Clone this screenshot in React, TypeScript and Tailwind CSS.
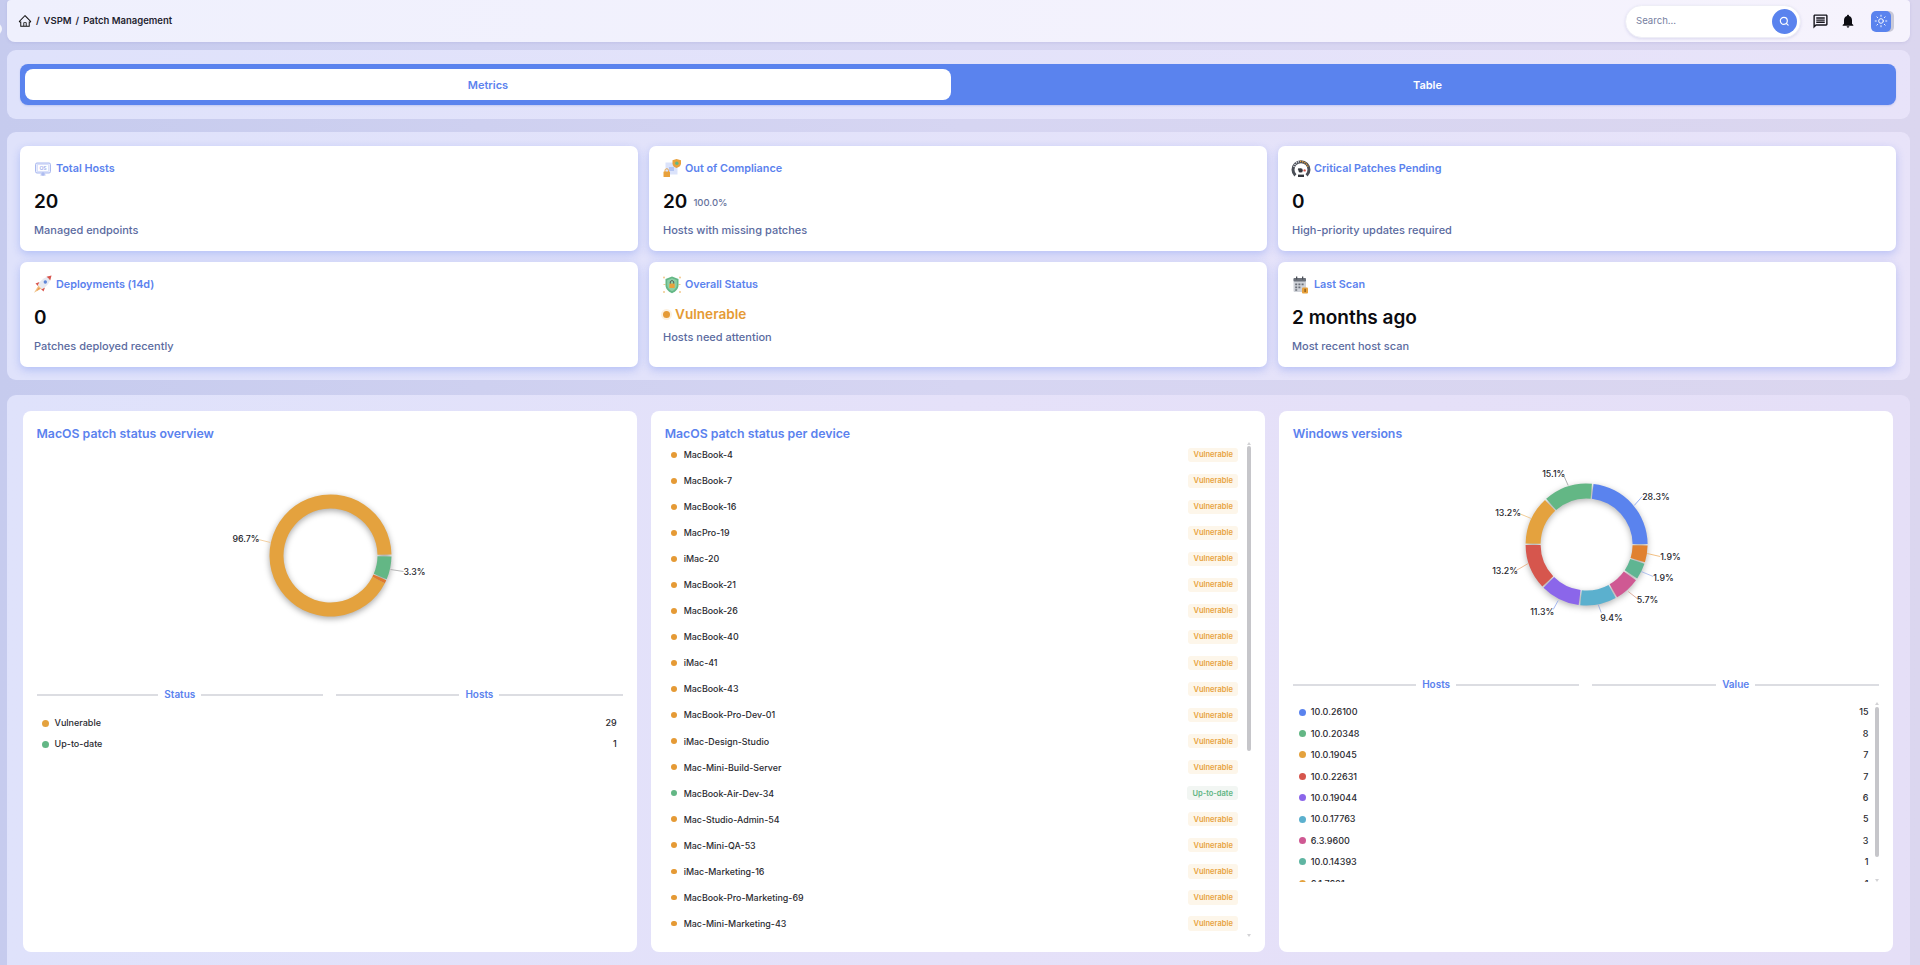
import { Search, Sun } from "lucide-react"
import { AiOutlineHome } from "react-icons/ai"
import { MdNotifications, MdOutlineMessage } from "react-icons/md"

const macDevices = [
  "MacBook-4",
  "MacBook-7",
  "MacBook-16",
  "MacPro-19",
  "iMac-20",
  "MacBook-21",
  "MacBook-26",
  "MacBook-40",
  "iMac-41",
  "MacBook-43",
  "MacBook-Pro-Dev-01",
  "iMac-Design-Studio",
  "Mac-Mini-Build-Server",
  "MacBook-Air-Dev-34",
  "Mac-Studio-Admin-54",
  "Mac-Mini-QA-53",
  "iMac-Marketing-16",
  "MacBook-Pro-Marketing-69",
  "Mac-Mini-Marketing-43",
]

const windowsRows = [
  { name: "10.0.26100", value: 15, dot: "bg-[#5a83ee]" },
  { name: "10.0.20348", value: 8, dot: "bg-[#63b785]" },
  { name: "10.0.19045", value: 7, dot: "bg-[#e4a23e]" },
  { name: "10.0.22631", value: 7, dot: "bg-[#d6564d]" },
  { name: "10.0.19044", value: 6, dot: "bg-[#8b66ea]" },
  { name: "10.0.17763", value: 5, dot: "bg-[#5bb0ce]" },
  { name: "6.3.9600", value: 3, dot: "bg-[#cf5993]" },
  { name: "10.0.14393", value: 1, dot: "bg-[#5fb5a2]" },
  { name: "6.1.7601", value: 1, dot: "bg-[#e4a23e]" },
]

// angles are degrees clockwise from 3 o'clock
function ringPath(cx: number, cy: number, r0: number, r1: number, a0: number, a1: number) {
  const pt = (r: number, a: number) => {
    const t = (a * Math.PI) / 180
    return `${(cx + r * Math.cos(t)).toFixed(2)} ${(cy + r * Math.sin(t)).toFixed(2)}`
  }
  const large = a1 - a0 > 180 ? 1 : 0
  return `M${pt(r1, a0)} A${r1} ${r1} 0 ${large} 1 ${pt(r1, a1)} L${pt(r0, a1)} A${r0} ${r0} 0 ${large} 0 ${pt(r0, a0)} Z`
}

const windowsSlices = [
  { a0: -83.5, a1: -0.5, fill: "#5a83ee" },
  { a0: 1, a1: 17, fill: "#e0812f" },
  { a0: 18.5, a1: 34, fill: "#5fb592" },
  { a0: 36, a1: 60, fill: "#cf5993" },
  { a0: 61.5, a1: 96, fill: "#5bb0ce" },
  { a0: 97.5, a1: 135, fill: "#8b66ea" },
  { a0: 136.5, a1: 179.5, fill: "#d6564d" },
  { a0: 181, a1: 227, fill: "#e4a23e" },
  { a0: 228.5, a1: 275, fill: "#63b785" },
]

const windowsLabels = [
  { t: "28.3%", x: 1642, y: 499, line: "M1634 505 L1642 496", c: "#7f9df0" },
  { t: "1.9%", x: 1660, y: 559, line: "M1647 553 L1660 556", c: "#efb065" },
  { t: "1.9%", x: 1653, y: 580, line: "M1641 571 L1653 576", c: "#9db3ea" },
  { t: "5.7%", x: 1636.5, y: 602, line: "M1628 591 L1637 598", c: "#d39a86" },
  { t: "9.4%", x: 1600, y: 620, line: "M1598 604 L1601 612", c: "#8ea6dc" },
  { t: "11.3%", x: 1530, y: 614, line: "M1558 600 L1553 609", c: "#8ea6ef" },
  { t: "13.2%", x: 1492, y: 573, line: "M1528 563 L1516 570", c: "#e6a877" },
  { t: "13.2%", x: 1495, y: 515, line: "M1531 518 L1519 513", c: "#efc07c" },
  { t: "15.1%", x: 1542, y: 476, line: "M1568 485 L1564 476", c: "#9a9a9a" },
]

function OsMonitorIcon() {
  return (
    <svg viewBox="0 0 18 18" className="h-[18px] w-[18px]">
      <rect x="1.5" y="3" width="15" height="10" rx="1.5" fill="#e6ebfd" stroke="#a9b8ef" strokeWidth="1" />
      <rect x="3.5" y="4.8" width="11" height="6.4" fill="#fff" stroke="#c3cef5" strokeWidth="0.5" />
      <text x="9" y="9.8" textAnchor="middle" className="fill-[#98a9ea] text-[5px] font-semibold">
        OS
      </text>
      <path d="M6.5 15h5M8 13h2v2H8z" stroke="#a9b8ef" strokeWidth="1" fill="#c3cef5" />
    </svg>
  )
}

function RocketIcon() {
  return (
    <svg viewBox="0 0 18 18" className="-mt-[3px] h-[18px] w-[18px] overflow-visible">
      <path d="M4.5 10.5 L0 17.8 L7.5 13.5 Z" fill="#f0c48a" />
      <path d="M4.5 12.5 L2.5 16 L6.2 13.8 Z" fill="#ee9a4e" />
      <path d="M5.5 7 L1.5 8.5 L4 11 Z" fill="#d9534a" />
      <path d="M11 12.5 L9.5 16.5 L7 14 Z" fill="#d9534a" />
      <path d="M4 9.5 C7 4.5 11.5 1.5 17.5 0.5 C16.5 6.5 13.5 11 8.5 14 Z" fill="#e6e9f1" />
      <path d="M12.5 1.8 L17.5 0.5 L16.2 5.5 C15 3.8 14 2.8 12.5 1.8 Z" fill="#d9534a" />
      <circle cx="11.3" cy="7" r="1.7" fill="#5f86d8" />
    </svg>
  )
}

function ComplianceIcon() {
  return (
    <svg viewBox="0 0 18 18" className="-mt-[2px] h-[18px] w-[18px] overflow-visible">
      <rect x="2.5" y="3.5" width="12" height="12" fill="#dbe3fb" />
      <rect x="6" y="8" width="5" height="4" fill="#b4c5f3" />
      <path d="M13.5 0 L18 1.3 V4.5 C18 6.8 15.8 8.4 13.5 9 C11.3 8.4 9.5 6.8 9.5 4.5 V1.3 Z" fill="#e8a13c" />
      <circle cx="13.8" cy="4.2" r="1.7" fill="#63b785" />
      <path d="M2 13 V11.5 C2 9.2 5.5 9.2 5.5 11.5 V13" fill="none" stroke="#e8a13c" strokeWidth="1" />
      <rect x="0.5" y="12.5" width="6.5" height="5.5" rx="0.5" fill="#e8a13c" />
    </svg>
  )
}

function ShieldIcon() {
  return (
    <svg viewBox="0 0 18 18" className="-mt-[1px] h-[18px] w-[18px] overflow-visible">
      <g fill="#f2c98e">
        <circle cx="1" cy="1.5" r="1" />
        <circle cx="17" cy="1.5" r="1" />
        <circle cx="1" cy="16" r="1" />
        <circle cx="17" cy="16" r="1" />
        <rect x="0.5" y="8" width="2" height="1" />
        <rect x="15.5" y="8" width="2" height="1" />
      </g>
      <path d="M9 0.5 L15.5 3 V9 C15.5 13 12.5 15.8 9 17.2 C5.5 15.8 2.5 13 2.5 9 V3 Z" fill="#63b785" />
      <path d="M9 2.3 L13.8 4.2 V9 C13.8 12 11.5 14.2 9 15.3 C6.5 14.2 4.2 12 4.2 9 V4.2 Z" fill="#8ccfa6" />
      <rect x="6.3" y="7.5" width="5.4" height="4.5" rx="0.5" fill="#e8a13c" />
      <path d="M7.3 7.5 V6.2 C7.3 4.2 10.7 4.2 10.7 6.2 V7.5" fill="none" stroke="#4a4a4a" strokeWidth="1" />
    </svg>
  )
}

function GaugeIcon() {
  return (
    <svg viewBox="0 0 18 18" className="-mt-[1px] h-[18px] w-[18px] overflow-visible">
      <path d="M3.4 15.4 A8 8 0 1 1 14.6 15.4" fill="none" stroke="#4b4f57" strokeWidth="3" />
      <path d="M1.8 7 A7.6 7.6 0 0 1 7 1.6" fill="none" stroke="#d8dbe2" strokeWidth="1.5" strokeDasharray="1.2 1" />
      <path d="M8 1.4 A7.6 7.6 0 0 1 16 7" fill="none" stroke="#e8a13c" strokeWidth="1.5" strokeDasharray="1.2 1" />
      <path d="M6 9 L10 10" stroke="#33363c" strokeWidth="1.6" />
      <circle cx="8.6" cy="10.4" r="2.2" fill="#33363c" />
      <circle cx="12.6" cy="10.4" r="1.2" fill="#d6564d" />
      <path d="M6 15.8h6" stroke="#33363c" strokeWidth="2.4" />
    </svg>
  )
}

function CalendarIcon() {
  return (
    <svg viewBox="0 0 18 18" className="-mt-[1px] h-[18px] w-[18px] overflow-visible">
      <rect x="1.5" y="2" width="12.5" height="14" rx="1.2" fill="#cfd2d8" />
      <rect x="1.5" y="2" width="12.5" height="3.6" rx="1" fill="#6b7079" />
      <rect x="4" y="0.5" width="1.3" height="3" fill="#4b4f57" />
      <rect x="10" y="0.5" width="1.3" height="3" fill="#4b4f57" />
      <path d="M3.2 7.5h2v1.8h-2zM6.4 7.5h2v1.8h-2zM9.6 7.5h2v1.8h-2zM3.2 10.5h2v1.8h-2zM6.4 10.5h2v1.8h-2zM3.2 13.3h2v1.5h-2z" fill="#6b7079" />
      <rect x="10" y="11.5" width="6" height="6" rx="1" fill="#e8a13c" />
      <rect x="12.5" y="12.8" width="1.2" height="3.2" fill="#7a5317" />
    </svg>
  )
}

function MetricCard({
  icon,
  title,
  children,
}: {
  icon: React.ReactNode
  title: string
  children: React.ReactNode
}) {
  return (
    <div className="h-[105px] rounded-[7px] bg-white px-[14px] pt-[15px] shadow-[0_3px_9px_rgba(88,120,235,0.32)]">
      <div className="flex h-4 items-center gap-1">
        <div className="flex h-[18px] w-[18px] shrink-0 items-center">{icon}</div>
        <span className="text-[10.8px] font-semibold text-[#5b82ee]">{title}</span>
      </div>
      {children}
    </div>
  )
}

function Value({ children, note }: { children: React.ReactNode; note?: string }) {
  return (
    <div className="mt-[11px] flex h-7 items-center gap-[6px]">
      <span className="text-[19px] font-semibold text-[#0b0b0f]">{children}</span>
      {note && <span className="mt-[3px] text-[9.5px] font-medium text-[#66729c]">{note}</span>}
    </div>
  )
}

function Sub({ children }: { children: React.ReactNode }) {
  return <p className="mt-[6px] text-[11px] leading-4 font-medium text-[#5b6b9f]">{children}</p>
}

function DividerHead({ label }: { label: string }) {
  return (
    <div className="flex h-5 items-center gap-[6px]">
      <div className="h-[2px] flex-1 bg-[#dcdde2]" />
      <span className="text-[10px] font-semibold text-[#5b82ee]">{label}</span>
      <div className="h-[2px] flex-1 bg-[#dcdde2]" />
    </div>
  )
}

function ScrollTrack({ thumb }: { thumb: string }) {
  return (
    <div className="flex w-[4px] shrink-0 flex-col items-center justify-between">
      <div className="h-0 w-0 border-x-[2.5px] border-b-[3px] border-x-transparent border-b-[#d3d3d6]" />
      <div className={`w-[4px] rounded-full bg-[#c6c6ca] ${thumb}`} />
      <div className="flex-1" />
      <div className="h-0 w-0 border-x-[2.5px] border-t-[3px] border-x-transparent border-t-[#d3d3d6]" />
    </div>
  )
}

export default function App() {
  return (
    <div className="relative h-[965px] overflow-hidden bg-gradient-to-r from-[#c6cbee] via-[#d6d5f2] to-[#dbd6ef] pr-[10px] pl-[7px] font-['Inter',sans-serif]">
      {/* sidebar handle */}
      <div className="absolute top-[23px] -left-[10px] h-3 w-3 rounded-full bg-white/80" />

      {/* Top bar */}
      <header className="flex h-[42px] items-center justify-between rounded-b-[8px] rounded-t-[4px] bg-gradient-to-r from-[#eff0fd] to-[#f6f3fd] pr-[19px] pl-[11px] shadow-[0_1px_3px_rgba(120,120,190,0.18)]">
        <nav className="flex items-center pt-px text-[9.5px] font-semibold text-[#1f2430]">
          <AiOutlineHome className="-mt-px h-[14px] w-[14px] text-[#111]" />
          <span className="mr-[4px] ml-[4px]">/</span>
          <span>VSPM</span>
          <span className="mx-[4px]">/</span>
          <span>Patch Management</span>
        </nav>
        <div className="flex items-center">
          <div className="flex h-[33px] w-[176px] items-center justify-between rounded-full border border-[#eeeef6] bg-white pr-[3px] pl-[10px] shadow-[0_1px_3px_rgba(120,120,190,0.2)]">
            <span className="text-[9.6px] text-[#76809f]">Search...</span>
            <div className="flex h-[25px] w-[25px] items-center justify-center rounded-full bg-[#5a83ee]">
              <Search className="h-[10.5px] w-[10.5px] text-white" strokeWidth={2.6} />
            </div>
          </div>
          <MdOutlineMessage className="ml-[11px] h-[17px] w-[17px] text-[#15151c]" />
          <MdNotifications className="ml-[11px] h-[16px] w-[16px] text-[#0c0c12]" />
          <div className="ml-[15px] flex h-[21px] w-[20px] items-center justify-center rounded-[5px] bg-[#5a83ee] shadow-[3px_0_0_#c9c9d8]">
            <Sun className="h-[14px] w-[14px] text-white" strokeWidth={1.6} />
          </div>
        </div>
      </header>

      {/* Tabs */}
      <section className="mt-2 h-[69px] rounded-[9px] bg-gradient-to-r from-[#dfe2fb] to-[#e8e3f9] pt-[14px] pr-[14px] pl-[13px]">
        <div className="flex h-[41px] items-center rounded-[8px] bg-[#5a83ee] pl-[5px] shadow-[0_1px_2px_rgba(70,100,200,0.2)]">
          <div className="flex h-[31px] w-[926px] items-center justify-center rounded-[8px] bg-white pt-px text-[11px] font-semibold text-[#5b82ee]">
            Metrics
          </div>
          <div className="flex h-[31px] flex-1 items-center justify-center pt-px pl-[8px] text-[11px] font-semibold text-white">
            Table
          </div>
        </div>
      </section>

      {/* Metrics */}
      <section className="mt-[13px] grid h-[248px] grid-cols-3 content-start gap-[11px] rounded-[9px] bg-gradient-to-r from-[#dfe2fb] to-[#e8e3f9] pt-[14px] pr-[14px] pl-[13px]">
        <MetricCard icon={<OsMonitorIcon />} title="Total Hosts">
          <Value>20</Value>
          <Sub>Managed endpoints</Sub>
        </MetricCard>
        <MetricCard icon={<ComplianceIcon />} title="Out of Compliance">
          <Value note="100.0%">20</Value>
          <Sub>Hosts with missing patches</Sub>
        </MetricCard>
        <MetricCard icon={<GaugeIcon />} title="Critical Patches Pending">
          <Value>0</Value>
          <Sub>High-priority updates required</Sub>
        </MetricCard>
        <MetricCard icon={<RocketIcon />} title="Deployments (14d)">
          <Value>0</Value>
          <Sub>Patches deployed recently</Sub>
        </MetricCard>
        <MetricCard icon={<ShieldIcon />} title="Overall Status">
          <div className="mt-[10px] flex h-[22px] items-center gap-[5px]">
            <span className="h-[7px] w-[7px] rounded-full bg-[#e59a35] shadow-[0_0_0_2px_#fdf1df]" />
            <span className="text-[13.6px] font-semibold text-[#e59a35]">Vulnerable</span>
          </div>
          <p className="mt-1 text-[11px] leading-4 font-medium text-[#5b6b9f]">Hosts need attention</p>
        </MetricCard>
        <MetricCard icon={<CalendarIcon />} title="Last Scan">
          <Value>2 months ago</Value>
          <Sub>Most recent host scan</Sub>
        </MetricCard>
      </section>

      {/* Charts */}
      <section className="mt-[15px] grid h-[600px] grid-cols-3 content-start gap-[14px] rounded-[9px] bg-gradient-to-r from-[#dfe2fb] via-[#e5e1f9] to-[#e5dff7] pt-4 pr-[17px] pl-[15.5px]">
        {/* MacOS overview */}
        <div className="h-[541px] rounded-[8px] bg-white px-[14px] pt-[14.5px]">
          <h3 className="h-4 text-[12.3px] leading-4 font-semibold text-[#5b82ee]">MacOS patch status overview</h3>
          <svg viewBox="36.5 441.5 586 243" className="h-[243px] w-[586px] overflow-visible">
            <g className="drop-shadow-[0_2px_3px_rgba(0,0,0,0.35)]">
              <path d={ringPath(330, 555, 47, 61, 27, 359)} fill="#e4a23e" />
              <path d={ringPath(330, 555, 47, 61, 24, 27)} fill="#e0792f" />
              <path d={ringPath(330, 555, 47, 61, 1, 23)} fill="#63b785" />
            </g>
            <path d="M258 539 L270 542" stroke="#f0c48a" strokeWidth="0.8" fill="none" />
            <path d="M390 569 L403 571" stroke="#a5a5a5" strokeWidth="0.8" fill="none" />
            <text x="232" y="541.5" className="fill-[#26262c] text-[8.8px] font-medium">
              96.7%
            </text>
            <text x="403" y="574.5" className="fill-[#26262c] text-[8.8px] font-medium">
              3.3%
            </text>
          </svg>
          <div className="grid grid-cols-2 gap-[13px]">
            <DividerHead label="Status" />
            <DividerHead label="Hosts" />
          </div>
          <div className="mt-2 flex h-[21px] items-center pr-[6px] pl-[5.5px] text-[9px] font-medium text-[#2a2a30]">
            <span className="h-[7px] w-[7px] rounded-full bg-[#e4a23e]" />
            <span className="ml-[5.5px] flex-1">Vulnerable</span>
            <span>29</span>
          </div>
          <div className="flex h-[21px] items-center pr-[6px] pl-[5.5px] text-[9px] font-medium text-[#2a2a30]">
            <span className="h-[7px] w-[7px] rounded-full bg-[#63b785]" />
            <span className="ml-[5.5px] flex-1">Up-to-date</span>
            <span>1</span>
          </div>
        </div>

        {/* MacOS per device */}
        <div className="h-[541px] rounded-[8px] bg-white px-[14px] pt-[14.5px]">
          <h3 className="h-4 text-[12.3px] leading-4 font-semibold text-[#5b82ee]">MacOS patch status per device</h3>
          <div className="mt-[0.5px] flex h-[495px] gap-[8px]">
            <div className="flex-1 overflow-hidden pr-[0.5px]">
              {macDevices.map((name) => {
                const ok = name === "MacBook-Air-Dev-34"
                return (
                  <div key={name} className="flex h-[26.03px] items-center pl-[6.5px]">
                    <span className={`h-[5.5px] w-[5.5px] rounded-full ${ok ? "bg-[#63b785]" : "bg-[#e59a35]"}`} />
                    <span className="ml-[7px] flex-1 text-[8.9px] font-medium text-[#2a2a30]">{name}</span>
                    <span
                      className={`flex h-[14.5px] items-center rounded-[3px] px-[5.5px] text-[7.5px] font-semibold ${
                        ok ? "bg-[#f2f6f3] text-[#5fb583]" : "bg-[#fdf6ea] text-[#e8a33d]"
                      }`}
                    >
                      {ok ? "Up-to-date" : "Vulnerable"}
                    </span>
                  </div>
                )
              })}
            </div>
            <ScrollTrack thumb="mt-[1px] h-[305px]" />
          </div>
        </div>

        {/* Windows versions */}
        <div className="h-[541px] rounded-[8px] bg-white px-[14px] pt-[14.5px]">
          <h3 className="h-4 text-[12.3px] leading-4 font-semibold text-[#5b82ee]">Windows versions</h3>
          <svg viewBox="1292.8 441.5 586 233" className="h-[233px] w-[586px] overflow-visible">
            <g className="drop-shadow-[0_2px_3px_rgba(0,0,0,0.3)]">
              {windowsSlices.map((s) => (
                <path key={s.fill + s.a0} d={ringPath(1586.4, 544, 46, 61, s.a0, s.a1)} fill={s.fill} />
              ))}
            </g>
            {windowsLabels.map((l) => (
              <g key={l.line}>
                <path d={l.line} stroke={l.c} strokeWidth="0.8" fill="none" />
                <text x={l.x} y={l.y} className="fill-[#26262c] text-[8.8px] font-medium">
                  {l.t}
                </text>
              </g>
            ))}
          </svg>
          <div className="grid grid-cols-2 gap-[13px]">
            <DividerHead label="Hosts" />
            <DividerHead label="Value" />
          </div>
          <div className="mt-[7px] flex h-[180.5px] gap-[6.5px]">
            <div className="flex-1 overflow-hidden">
              {windowsRows.map((row) => (
                <div key={row.name} className="flex h-[21.4px] items-center pl-[6px] text-[9px] font-medium text-[#2a2a30]">
                  <span className={`h-[7px] w-[7px] rounded-full ${row.dot}`} />
                  <span className="ml-[5px] flex-1">{row.name}</span>
                  <span>{row.value}</span>
                </div>
              ))}
            </div>
            <ScrollTrack thumb="mt-[2px] h-[150px]" />
          </div>
        </div>
      </section>
    </div>
  )
}
